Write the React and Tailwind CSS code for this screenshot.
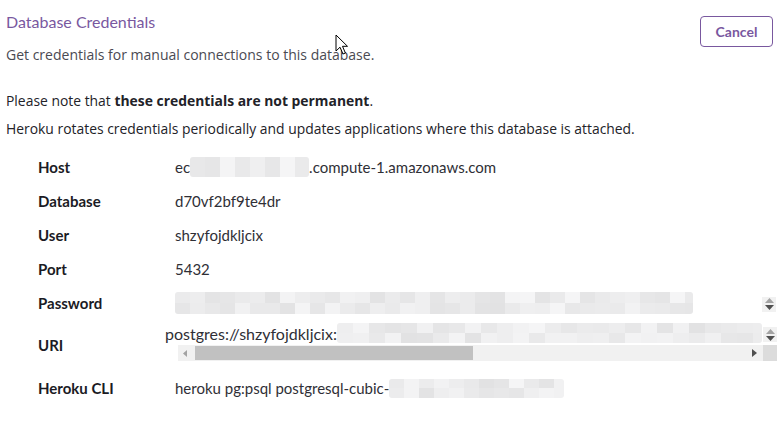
import React from "react";

function shades(seed, n) {
  let s = seed;
  const out = [];
  for (let i = 0; i < n; i++) {
    s = (s * 9301 + 49297) % 233280;
    const v = 226 + Math.floor((s / 233280) * 20);
    out.push(`rgb(${v},${v},${v + 1})`);
  }
  return out;
}

function Mosaic({ width, height, cell = 15, rows = 1, seed = 1, className = "" }) {
  const cols = Math.ceil(width / cell);
  const cs = shades(seed, cols * rows);
  const rh = height / rows;
  return (
    <div className={"shrink-0 overflow-hidden rounded-[3px] flex flex-col " + className} style={{ width, height }}>
      {Array.from({ length: rows }).map((_, r) => (
        <div key={r} className="flex" style={{ height: rh }}>
          {Array.from({ length: cols }).map((_, c) => (
            <div key={c} className="shrink-0" style={{ width: cell, height: rh, background: cs[r * cols + c] }} />
          ))}
        </div>
      ))}
    </div>
  );
}

function Spinner() {
  return (
    <div className="w-[14px] h-[15px] bg-[#f1f1f1] flex flex-col items-center justify-center gap-[2px]">
      <svg width="9" height="5" viewBox="0 0 9 5"><path d="M4.5 0 L9 5 L0 5 Z" fill="#a3a3a3" /></svg>
      <svg width="9" height="5" viewBox="0 0 9 5"><path d="M0 0 L9 0 L4.5 5 Z" fill="#505050" /></svg>
    </div>
  );
}

function Label({ children }) {
  return <div className="w-[169px] shrink-0 pl-[32px] font-bold text-[15px] text-[#1b1b24]">{children}</div>;
}

function Row({ label, children, h = "h-[34px]" }) {
  return (
    <div className={"flex items-center " + h}>
      <Label>{label}</Label>
      <div className="flex-1 text-[15px] text-[#2f2f36]">{children}</div>
    </div>
  );
}

export default function App() {
  return (
    <div
      className="relative w-[784px] h-[422px] bg-white overflow-hidden"
      style={{ fontFamily: "Lato, 'Open Sans', sans-serif" }}
    >
      <div className="flex justify-between pl-[6px] pr-[11px] pt-[12px]">
        <div>
          <div className="text-[16px] leading-[20px] text-[#79589f]">Database Credentials</div>
          <div
            className="mt-[13px] text-[14px] leading-[20px] text-[#4a4a52]"
            style={{ fontFamily: "'Open Sans', sans-serif" }}
          >
            Get credentials for manual connections to this database.
          </div>
        </div>
        <button className="mt-[4px] w-[73px] h-[31px] rounded-[4px] border border-[#79589f] text-[#79589f] text-[14px] font-bold bg-white">
          Cancel
        </button>
      </div>

      <div
        className="pl-[6px] mt-[22px] text-[13.9px] leading-[28px] text-[#222228]"
        style={{ fontFamily: "'Open Sans', sans-serif" }}
      >
        <div>
          Please note that <span className="font-bold">these credentials are not permanent</span>.
        </div>
        <div>Heroku rotates credentials periodically and updates applications where this database is attached.</div>
      </div>

      <div className="pl-[6px] mt-[7px]">
        <Row label="Host">
          <div className="flex items-center">
            <span>ec</span>
            <Mosaic width={119} height={20} cell={15} seed={3} />
            <span>.compute-1.amazonaws.com</span>
          </div>
        </Row>
        <Row label="Database">d70vf2bf9te4dr</Row>
        <Row label="User">shzyfojdkljcix</Row>
        <Row label="Port">5432</Row>
        <Row label="Password">
          <div className="flex items-center justify-between w-[602px] pr-[1px]">
            <Mosaic width={518} height={22} cell={15} rows={2} seed={7} />
            <div className="mt-[2px]"><Spinner /></div>
          </div>
        </Row>
        <div className="flex items-center h-[51px]">
          <Label>URI</Label>
          <div className="self-start mt-[2px] -ml-[10px] w-[612px] h-[39px] flex flex-col">
            <div className="flex h-[23px]">
              <div className="flex-1 overflow-hidden">
                <div className="flex items-end h-[21px]">
                  <span className="text-[16px] leading-[18px] text-[#2f2f36] whitespace-nowrap">postgres://shzyfojdkljcix:</span>
                  <Mosaic width={425} height={20} cell={16} rows={2} seed={11} />
                </div>
              </div>
              <div className="mt-[5px]"><Spinner /></div>
            </div>
            <div className="flex h-[16px]">
              <div className="flex-1 ml-[13px] bg-[#f1f1f1] flex items-center relative">
                <svg className="ml-[5px]" width="4" height="7" viewBox="0 0 4 7"><path d="M4 0 L4 7 L0 3.5 Z" fill="#a3a3a3" /></svg>
                <div className="ml-[8px] w-[278px] h-[14px] bg-[#c1c1c1]" />
                <svg className="absolute right-[6px]" width="5" height="8" viewBox="0 0 5 8"><path d="M0 0 L5 4 L0 8 Z" fill="#505050" /></svg>
              </div>
              <div className="w-[14px] bg-[#dcdcdc]" />
            </div>
          </div>
        </div>
        <Row label="Heroku CLI">
          <div className="flex items-center">
            <span>heroku pg:psql postgresql-cubic-</span>
            <Mosaic width={175} height={19} cell={15} rows={2} seed={5} />
          </div>
        </Row>
      </div>

      <svg className="absolute left-[335px] top-[34px]" width="14" height="22" viewBox="0 0 14 22">
        <path d="M1 1 L1 17 L5 13.2 L8 20 L10.4 19 L7.5 12.3 L12.5 12.3 Z" fill="white" stroke="black" strokeWidth="1" strokeLinejoin="round" />
      </svg>
    </div>
  );
}
